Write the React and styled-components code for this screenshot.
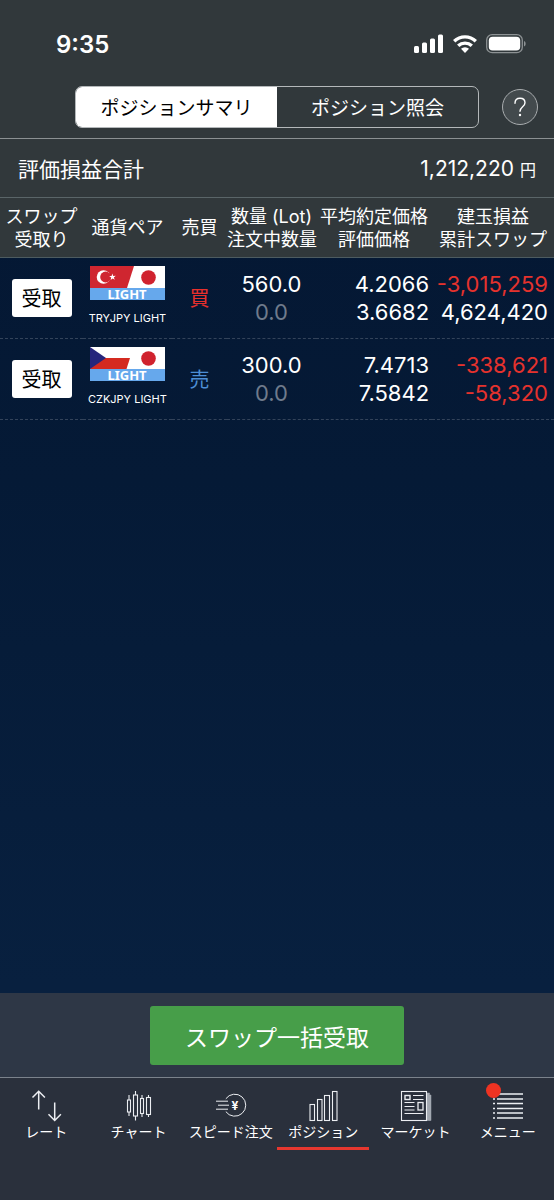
import React, { useState } from 'react';
import styled, { createGlobalStyle } from 'styled-components';

const GlobalStyle = createGlobalStyle`
  * {
    box-sizing: border-box;
  }
  body {
    margin: 0;
    font-family: Inter, 'Noto Sans CJK JP', sans-serif;
    color: #fff;
  }
  button {
    font-family: inherit;
    padding: 0;
    cursor: pointer;
  }
`;

const Page = styled.div`
  display: flex;
  flex-direction: column;
  min-height: 100vh;
  background: linear-gradient(#041632, #051a36 40%, #08203f 82%);
`;

const Header = styled.header`
  background-color: #31383b;
  border-bottom: 1px solid #8b9092;
`;

const StatusBar = styled.div`
  display: flex;
  align-items: center;
  justify-content: space-between;
  height: 86px;
  padding: 2px 28px 0 56px;
`;

const Clock = styled.span`
  font-size: 24px;
  font-weight: 600;
`;

const StatusIcons = styled.div`
  display: flex;
  align-items: center;
  gap: 9px;
`;

const Toolbar = styled.div`
  display: flex;
  align-items: center;
  gap: 23px;
  padding: 0 16px 10px 75px;
`;

const Segments = styled.div`
  display: flex;
  flex: 1;
  height: 42px;
  border: 1px solid #b4b8ba;
  border-radius: 7px;
  overflow: hidden;
`;

const Segment = styled.button`
  flex: 1;
  padding-bottom: 2px;
  border: 0;
  font-size: 19px;
  color: ${props => props.$active ? '#000' : '#fff'};
  background-color: ${props => props.$active ? '#fff' : 'transparent'};
`;

const Help = styled.button`
  width: 36px;
  height: 36px;
  border: 1px solid #a9adaf;
  border-radius: 50%;
  background-color: #434a4d;
  display: flex;
  align-items: center;
  justify-content: center;
`;

const Summary = styled.section`
  display: flex;
  align-items: center;
  justify-content: space-between;
  height: 58px;
  padding: 0 18px;
  background-color: #31383b;
  font-size: 21px;
`;

const Unit = styled.span`
  margin-left: 6px;
  font-size: 16px;
`;

const Main = styled.main`
  flex: 1;
`;

const Table = styled.table`
  width: 100%;
  table-layout: fixed;
  border-collapse: collapse;
`;

const HeadCell = styled.th`
  width: ${props => props.$width};
  height: 60px;
  padding: 0;
  border-top: 1px solid #5a6568;
  border-bottom: 1px solid #4d5b60;
  background-color: #31383b;
  font-size: 18px;
  font-weight: 400;
  line-height: 23px;
  white-space: nowrap;
`;

const Cell = styled.td`
  height: 81px;
  padding: 0 ${props => props.$end || '0'} 0 0;
  border-bottom: 1px dashed #33435a;
  font-size: 22px;
  line-height: 28px;
  text-align: ${props => props.$end ? 'right' : 'center'};
  white-space: nowrap;
`;

const Amount = styled.div`
  color: ${props => props.$muted ? '#6f7b8c' : props.$minus ? '#e5322d' : '#fff'};
`;

const Receive = styled.button`
  display: block;
  width: 60px;
  height: 38px;
  margin: 0 auto;
  padding-bottom: 2px;
  border: 0;
  border-radius: 3px;
  background-color: #fff;
  color: #000;
  font-size: 20px;
`;

const Pair = styled.div`
  display: flex;
  flex-direction: column;
  align-items: center;
  gap: 8px;
  padding-bottom: 2px;
  font-size: 11px;
  line-height: 20px;
`;

const Side = styled.span`
  font-size: 20px;
  color: ${props => props.$buy ? '#e8302c' : '#4d8fd6'};
`;

const ActionBar = styled.div`
  display: flex;
  justify-content: center;
  padding: 13px 0 12px;
  background-color: #2e3746;
`;

const ReceiveAll = styled.button`
  width: 254px;
  height: 59px;
  border: 0;
  border-radius: 3px;
  background-color: #479e49;
  color: #fff;
  font-size: 23px;
`;

const Nav = styled.nav`
  display: flex;
  height: 123px;
  border-top: 1px solid #7b828c;
  background-color: #2a303c;
`;

const NavItem = styled.a`
  flex: 1;
  display: flex;
  flex-direction: column;
  align-items: center;
  height: 72px;
  padding-top: 11px;
  border-bottom: 3px solid ${props => props.$active ? '#e6372f' : 'transparent'};
  color: #fff;
  font-size: 14px;
  line-height: 20px;
  text-decoration: none;
  white-space: nowrap;
`;

const IconBox = styled.span`
  position: relative;
  display: block;
  height: 33px;
`;

const Badge = styled.span`
  position: absolute;
  top: -6px;
  left: -2px;
  width: 15px;
  height: 15px;
  border-radius: 50%;
  background-color: #ee3322;
`;

const FlagSvg = styled.svg`
  overflow: visible;
`;

const Signal = () => (
  <svg width="30" height="20" viewBox="0 0 30 20" fill="#fff">
    <rect x="0" y="12" width="5" height="7" rx="1.5" />
    <rect x="8" y="8.500" width="5" height="10.500" rx="1.5" />
    <rect x="16" y="4.500" width="5" height="14.500" rx="1.5" />
    <rect x="24" y="0.500" width="5" height="18.500" rx="1.5" />
  </svg>
);

const Wifi = () => (
  <svg width="24" height="20" viewBox="0 0 24 20" fill="none" stroke="#fff" strokeWidth="3.400">
    <path d="M1.200 7.200a15.600 15.600 0 0 1 21.600 0" />
    <path d="M5.200 11.800a10 10 0 0 1 13.600 0" />
    <path d="M12 19l-4-4.200a6 6 0 0 1 8 0z" fill="#fff" stroke="none" />
  </svg>
);

const Battery = () => (
  <svg width="40" height="20" viewBox="0 0 40 20">
    <rect x="0.700" y="0.700" width="35.600" height="18" rx="5.500" fill="none" stroke="#8d9294" strokeWidth="1.300" />
    <rect x="2.800" y="2.800" width="31.400" height="13.800" rx="3.800" fill="#fff" />
    <path d="M38 7v5.500c2.200-.8 2.200-4.700 0-5.500z" fill="#8d9294" />
  </svg>
);

const Question = () => (
  <svg width="14" height="20" viewBox="0 0 14 20" fill="none" stroke="#fff" strokeWidth="1.400">
    <path d="M2 6.200C2 3 4.200 1.200 7 1.200s5 1.700 5 4.500c0 4-5 4-5 8.600" strokeLinecap="round" />
    <circle cx="7" cy="18" r="1.200" fill="#fff" stroke="none" />
  </svg>
);

const Flag = ({ country }) => (
  <FlagSvg width="75" height="34" viewBox="0 0 75 34">
    <rect width="75" height="22" fill="#fff" />
    {
      country === 'TRY'
        ? <g>
            <path d="M0 0h44l-7 22H0z" fill="#cf2630" />
            <circle cx="13.500" cy="11" r="6.800" fill="#fff" />
            <circle cx="15.600" cy="11" r="5.400" fill="#cf2630" />
            <path d="M22.300 7.500l.9 2.400 2.600-.1-2 1.600 1 2.400-2.200-1.400-2 1.600.6-2.500-2.100-1.400 2.500-.2z" fill="#fff" />
          </g>
        : <g>
            <path d="M0 11h40l-3.500 11H0z" fill="#d42a20" />
            <path d="M0 0l16 11L0 22z" fill="#26257c" />
          </g>
    }
    <circle cx="58.500" cy="11.500" r="7.300" fill="#d0222e" />
    <rect y="22" width="75" height="12" fill="#66a8ec" />
    <text x="37" y="33" textAnchor="middle" fontFamily="Noto Sans, sans-serif" fontWeight="700" fontSize="13" fill="#fff">LIGHT</text>
  </FlagSvg>
);

const NavSvg = ({ children }) => (
  <svg width="40" height="33" viewBox="0 0 40 33" fill="none" stroke="#eceef2" strokeWidth="1.100">
    {children}
  </svg>
);

const RateIcon = () => (
  <NavSvg>
    <path d="M12.700 20.500V2.500M6.500 8.500l6.200-6.200 6.200 6.200M28.700 13.500v18M22.500 25.300l6.200 6.200 6.200-6.200" strokeWidth="1.500" />
  </NavSvg>
);

const ChartIcon = () => (
  <NavSvg>
    <rect x="9.500" y="11" width="3" height="12" />
    <rect x="15.500" y="6" width="4" height="21" />
    <rect x="22.500" y="9.500" width="3" height="15" />
    <rect x="28.500" y="8.500" width="4" height="17" />
    <path d="M11 6v5M11 23v4M17.500 2v4M17.500 27v4.500M24 6v3.500M24 24.500V28M30.500 6v2.500M30.500 25.500V28" />
  </NavSvg>
);

const SpeedIcon = () => (
  <NavSvg>
    <path d="M14.800 9.800a11 11 0 1 1 0 12.800M5 12.200h12M7 16.200h11M5 20.200h12" strokeWidth="1" />
    <text x="24" y="20.500" textAnchor="middle" fontFamily="Inter, sans-serif" fontWeight="700" fontSize="12" fill="#fff" stroke="none">¥</text>
  </NavSvg>
);

const PositionIcon = () => (
  <NavSvg>
    <rect x="7" y="15.500" width="4.500" height="16" />
    <rect x="14.500" y="10.500" width="4.500" height="21" />
    <rect x="21.500" y="6.500" width="5" height="25" />
    <rect x="29.500" y="2.500" width="4.500" height="29" />
  </NavSvg>
);

const MarketIcon = () => (
  <NavSvg>
    <path d="M32 4h2.500v27.500H32zM34.500 6H36v25.500h-1.500z" fill="#a3a8b1" stroke="#a3a8b1" strokeWidth="0.500" />
    <rect x="6.500" y="2.500" width="25" height="29" />
    <rect x="10" y="6.500" width="5" height="4" strokeWidth="1.400" />
    <rect x="23" y="13.500" width="5" height="7.500" strokeWidth="1.300" />
    <path d="M18 6.500h10.500M18 10.500h10.500M9.500 13.500h10M9.500 17.500h10M9.500 21h10M9.500 24.500h19" />
  </NavSvg>
);

const MenuIcon = () => (
  <NavSvg>
    <path d="M9 5h26M9 10h26M9 14.500h26M9 19.500h26M9 24h26M9 29h26" strokeWidth="1.700" />
    <path d="M5 10h2M5 14.500h2M5 19.500h2M5 24h2M5 29h2" strokeWidth="1.700" />
  </NavSvg>
);

const columns = [
  { lines: ['スワップ', '受取り'], width: '15%' },
  { lines: ['通貨ペア'], width: '16%' },
  { lines: ['売買'], width: '10%' },
  { lines: ['数量 (Lot)', '注文中数量'], width: '16%' },
  { lines: ['平均約定価格', '評価価格'], width: '21%' },
  { lines: ['建玉損益', '累計スワップ'], width: '22%' },
];

const positions = [
  { country: 'TRY', pair: 'TRYJPY LIGHT', side: '買', lot: '560.0', pending: '0.0', average: '4.2066', current: '3.6682', profit: '-3,015,259', swap: '4,624,420' },
  { country: 'CZK', pair: 'CZKJPY LIGHT', side: '売', lot: '300.0', pending: '0.0', average: '7.4713', current: '7.5842', profit: '-338,621', swap: '-58,320' },
];

const navItems = [
  { label: 'レート', Icon: RateIcon },
  { label: 'チャート', Icon: ChartIcon },
  { label: 'スピード注文', Icon: SpeedIcon },
  { label: 'ポジション', Icon: PositionIcon },
  { label: 'マーケット', Icon: MarketIcon },
  { label: 'メニュー', Icon: MenuIcon, badge: true },
];

const App = () => {
  const [tab, setTab] = useState(0);
  const [page, setPage] = useState(3);
  return (
    <Page lang="ja">
      <GlobalStyle />
      <Header>
        <StatusBar>
          <Clock>9:35</Clock>
          <StatusIcons>
            <Signal />
            <Wifi />
            <Battery />
          </StatusIcons>
        </StatusBar>
        <Toolbar>
          <Segments>
            {['ポジションサマリ', 'ポジション照会'].map((name, i) => (
              <Segment key={name} type="button" $active={tab === i} aria-pressed={tab === i} onClick={() => setTab(i)}>{name}</Segment>
            ))}
          </Segments>
          <Help type="button" aria-label="ヘルプ"><Question /></Help>
        </Toolbar>
      </Header>
      <Summary>
        <span>評価損益合計</span>
        <span>1,212,220<Unit>円</Unit></span>
      </Summary>
      <Main>
        <Table>
          <thead>
            <tr>
              {columns.map(col => (
                <HeadCell key={col.lines[0]} scope="col" $width={col.width}>
                  {col.lines.map(line => <div key={line}>{line}</div>)}
                </HeadCell>
              ))}
            </tr>
          </thead>
          <tbody>
            {positions.map(row => (
              <tr key={row.pair}>
                <Cell><Receive type="button">受取</Receive></Cell>
                <Cell>
                  <Pair>
                    <Flag country={row.country} />
                    <span>{row.pair}</span>
                  </Pair>
                </Cell>
                <Cell><Side $buy={row.side === '買'}>{row.side}</Side></Cell>
                <Cell>
                  <Amount>{row.lot}</Amount>
                  <Amount $muted>{row.pending}</Amount>
                </Cell>
                <Cell $end="3px">
                  <Amount>{row.average}</Amount>
                  <Amount>{row.current}</Amount>
                </Cell>
                <Cell $end="6px">
                  <Amount $minus={row.profit.startsWith('-')}>{row.profit}</Amount>
                  <Amount $minus={row.swap.startsWith('-')}>{row.swap}</Amount>
                </Cell>
              </tr>
            ))}
          </tbody>
        </Table>
      </Main>
      <ActionBar>
        <ReceiveAll type="button">スワップ一括受取</ReceiveAll>
      </ActionBar>
      <Nav>
        {navItems.map(({ label, Icon, badge }, i) => (
          <NavItem key={label} href="#" $active={page === i} onClick={() => setPage(i)}>
            <IconBox>
              <Icon />
              {badge ? <Badge /> : null}
            </IconBox>
            {label}
          </NavItem>
        ))}
      </Nav>
    </Page>
  )
}

export default App;
